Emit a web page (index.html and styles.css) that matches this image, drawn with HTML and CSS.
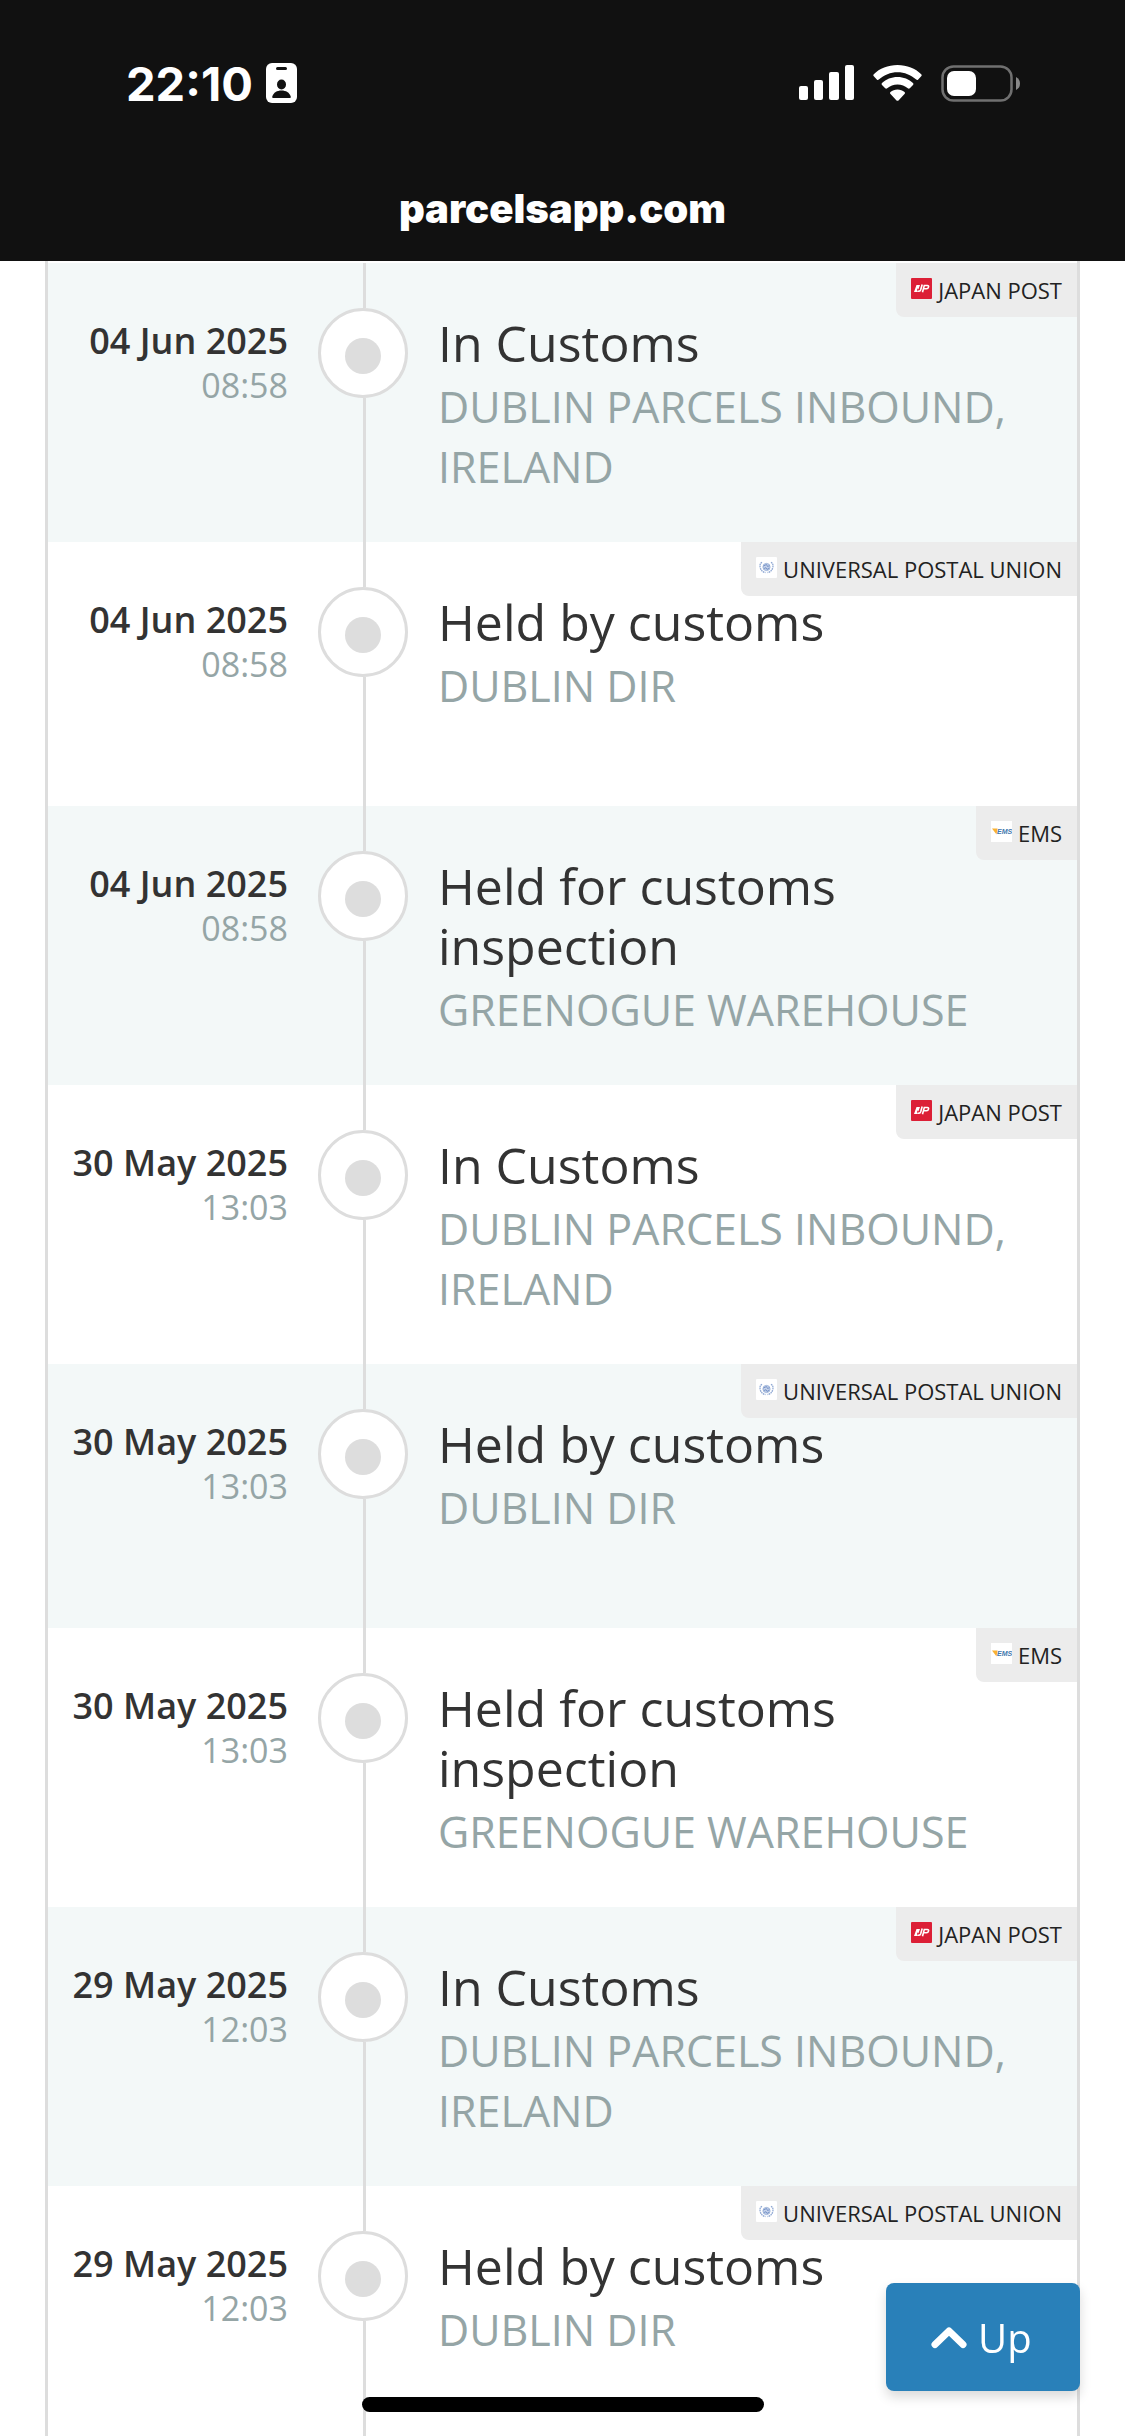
FILE: index.html
```
<!DOCTYPE html>
<html lang="en">
<head>
    <meta charset="UTF-8">
    <meta name="viewport" content="width=device-width, initial-scale=1.0">
    <title>Parcel tracking - parcelsapp.com</title>
    <link rel="stylesheet" href="styles.css">
</head>
<body>
    <!-- shared carrier logos -->
    <svg class="sprite" aria-hidden="true">
        <symbol id="logo-jp" viewBox="0 0 21 21">
            <rect width="21" height="21" rx="1" fill="#dc1f36"/>
            <path d="M5.500 7H9l-1.700 4.500-.6-1.200L6 12l1 2H3z" fill="#fff"/>
            <path d="M11.200 6.500L9.600 12q-.5 1.500-2.800 1.300M11.500 14.200L13.300 7.500h3q1.700 0 1.200 1.600-.4 1.600-2 1.600h-2.700" fill="none" stroke="#fff" stroke-width="1.600"/>
        </symbol>
        <symbol id="logo-upu" viewBox="0 0 21 21">
            <rect width="21" height="21" rx="1" fill="#fff"/>
            <circle cx="10.500" cy="10" r="3.600" fill="#c5d2ea" stroke="#8fa8d3" stroke-width=".8"/>
            <path d="M7.500 9l3-1.500 1 2 2-.8M8 11.500l2-.8 1 1.800 2-1.500" fill="none" stroke="#6f8dc4" stroke-width=".9"/>
            <path d="M6 5.200Q3 7 4.500 11.500 5.700 15 9.500 15.500M15 5.200Q18 7 16.500 11.500 15.300 15 11.500 15.500" fill="none" stroke="#8fa8d3" stroke-width="1.300" stroke-dasharray="1.600 .6"/>
        </symbol>
        <symbol id="logo-ems" viewBox="0 0 21 21">
            <rect width="21" height="21" fill="#fff"/>
            <path d="M1 7.500h5.500l-1 6z" fill="#f9b233"/>
            <text x="6" y="13" class="logo-ems-text">EMS</text>
        </symbol>
    </svg>

    <header class="topbar">
        <div class="status">
            <div class="status-left">
                <span>22:10</span>
                <svg width="31" height="40" viewBox="0 0 31 40" aria-hidden="true">
                    <rect width="31" height="40" rx="6" fill="#fff"/>
                    <rect x="10" y="4" width="11" height="3" rx="1.500" fill="#111"/>
                    <ellipse cx="15.500" cy="21.500" rx="4.500" ry="5" fill="#111"/>
                    <path d="M7 35q-1 0-.7-1.500C7.500 29.500 11 27.500 15.500 27.500s8 2 9.200 6q.3 1.500-.7 1.500z" fill="#111"/>
                </svg>
            </div>
            <div class="status-right">
                <svg width="55" height="36" viewBox="0 0 55 36" fill="#fff" aria-hidden="true">
                    <rect x="0" y="21" width="9" height="14" rx="2"/>
                    <rect x="15" y="15" width="9" height="20" rx="2"/>
                    <rect x="30" y="7" width="10" height="28" rx="2"/>
                    <rect x="46" y="0" width="9" height="35" rx="2"/>
                </svg>
                <svg width="49" height="36" viewBox="0 0 49 36" fill="#fff" aria-hidden="true">
                    <path d="M24.500 0C15 0 6.500 3.500.8 9.200q-1 1 0 2l3 3.200q1 1 2 .1C11 9.800 17.500 7.200 24.500 7.200s13.500 2.600 18.700 7.300q1 .9 2-.1l3-3.200q1-1 0-2C42.500 3.500 34 0 24.500 0z"/>
                    <path d="M24.500 12c-6 0-11.500 2.300-15.500 6q-1 1 0 2l3.200 3.300q1 .9 2 0c2.800-2.400 6.400-3.900 10.300-3.900s7.500 1.500 10.300 3.900q1 .9 2 0L40 20q1-1 0-2c-4-3.700-9.500-6-15.500-6z"/>
                    <path d="M24.500 24.500c-2.700 0-5.200 1-7 2.500q-1 .9 0 2l6 6.400q1 .9 2 0l6-6.400q1-1.100 0-2c-1.800-1.500-4.300-2.500-7-2.500z"/>
                </svg>
                <svg width="79" height="37" viewBox="0 0 79 37" aria-hidden="true">
                    <rect x="1.500" y="1.500" width="69" height="34" rx="11" fill="none" stroke="#707070" stroke-width="2.500"/>
                    <rect x="6" y="6" width="29" height="25" rx="7" fill="#fff"/>
                    <path d="M75 12q4 2 4 6.500T75 25z" fill="#888"/>
                </svg>
            </div>
        </div>
        <div class="address">parcelsapp.com</div>
    </header>

    <main class="tracking">
        <ul class="events">
            <li class="event">
                <div class="event-time"><strong>04 Jun 2025</strong><span>08:58</span></div>
                <div class="event-spine"><i class="event-dot"></i></div>
                <div class="event-content"><strong>In Customs</strong><span>DUBLIN PARCELS INBOUND, IRELAND</span></div>
                <div class="carrier"><svg><use href="#logo-jp"/></svg>JAPAN POST</div>
            </li>
            <li class="event">
                <div class="event-time"><strong>04 Jun 2025</strong><span>08:58</span></div>
                <div class="event-spine"><i class="event-dot"></i></div>
                <div class="event-content"><strong>Held by customs</strong><span>DUBLIN DIR</span></div>
                <div class="carrier"><svg><use href="#logo-upu"/></svg>UNIVERSAL POSTAL UNION</div>
            </li>
            <li class="event">
                <div class="event-time"><strong>04 Jun 2025</strong><span>08:58</span></div>
                <div class="event-spine"><i class="event-dot"></i></div>
                <div class="event-content"><strong>Held for customs inspection</strong><span>GREENOGUE WAREHOUSE</span></div>
                <div class="carrier"><svg><use href="#logo-ems"/></svg>EMS</div>
            </li>
            <li class="event">
                <div class="event-time"><strong>30 May 2025</strong><span>13:03</span></div>
                <div class="event-spine"><i class="event-dot"></i></div>
                <div class="event-content"><strong>In Customs</strong><span>DUBLIN PARCELS INBOUND, IRELAND</span></div>
                <div class="carrier"><svg><use href="#logo-jp"/></svg>JAPAN POST</div>
            </li>
            <li class="event">
                <div class="event-time"><strong>30 May 2025</strong><span>13:03</span></div>
                <div class="event-spine"><i class="event-dot"></i></div>
                <div class="event-content"><strong>Held by customs</strong><span>DUBLIN DIR</span></div>
                <div class="carrier"><svg><use href="#logo-upu"/></svg>UNIVERSAL POSTAL UNION</div>
            </li>
            <li class="event">
                <div class="event-time"><strong>30 May 2025</strong><span>13:03</span></div>
                <div class="event-spine"><i class="event-dot"></i></div>
                <div class="event-content"><strong>Held for customs inspection</strong><span>GREENOGUE WAREHOUSE</span></div>
                <div class="carrier"><svg><use href="#logo-ems"/></svg>EMS</div>
            </li>
            <li class="event">
                <div class="event-time"><strong>29 May 2025</strong><span>12:03</span></div>
                <div class="event-spine"><i class="event-dot"></i></div>
                <div class="event-content"><strong>In Customs</strong><span>DUBLIN PARCELS INBOUND, IRELAND</span></div>
                <div class="carrier"><svg><use href="#logo-jp"/></svg>JAPAN POST</div>
            </li>
            <li class="event">
                <div class="event-time"><strong>29 May 2025</strong><span>12:03</span></div>
                <div class="event-spine"><i class="event-dot"></i></div>
                <div class="event-content"><strong>Held by customs</strong><span>DUBLIN DIR</span></div>
                <div class="carrier"><svg><use href="#logo-upu"/></svg>UNIVERSAL POSTAL UNION</div>
            </li>
        </ul>
    </main>

    <button type="button" class="up-button">
        <svg width="36" height="23" viewBox="0 0 36 23" aria-hidden="true">
            <path d="M4 18.500L18 5l14 13.500" fill="none" stroke="#fff" stroke-width="7" stroke-linecap="round" stroke-linejoin="round"/>
        </svg>
        Up
    </button>
    <div class="home-indicator"></div>
</body>
</html>
```
FILE: styles.css
```
* {
    box-sizing: border-box;
}
body {
    margin: 0;
    height: 100vh;
    display: flex;
    flex-direction: column;
    overflow: hidden;
    font-family: "Open Sans", "Noto Sans", sans-serif;
    background-color: white;
    color: #333;
}
.sprite {
    display: none;
}
.logo-ems-text {
    font: italic 700 7px "Liberation Sans", sans-serif;
    fill: #3f76ad;
}

/* phone status bar and address */
.topbar {
    flex: none;
    padding-bottom: 9px;
    background-color: #111;
    color: white;
    font-family: Inter, sans-serif;
}
.status {
    display: flex;
    justify-content: space-between;
    align-items: center;
    height: 166px;
    padding: 0 105px 0 126px;
}
.status-left {
    display: flex;
    align-items: center;
    gap: 13px;
    font-size: 47px;
    font-weight: 700;
}
.status-right {
    display: flex;
    align-items: center;
    gap: 19px;
}
.address {
    font-size: 40px;
    font-weight: 900;
    line-height: 86px;
    text-align: center;
}

/* timeline */
.tracking {
    flex: 1;
    min-height: 0;
    margin: 0 45px;
    padding-top: 2px;
    border: solid #ddd;
    border-width: 0 3px;
    overflow: hidden;
}
.events {
    margin: 0;
    padding: 0;
    list-style: none;
}
.event {
    position: relative;
    display: grid;
    grid-template-columns: 270px 90px 1fr;
    min-height: 264px;
}
.event:nth-child(odd) {
    background-color: #f3f8f8;
}
.event-time {
    padding: 55px 30px 0 0;
    text-align: right;
    font-size: 34px;
    line-height: 45px;
    color: #95a5a6;
}
.event-time strong {
    display: block;
    font-size: 36px;
    font-weight: 600;
    color: #333;
}
.event-spine {
    display: flex;
    flex-direction: column;
    align-items: center;
}
.event-spine::before,
.event-spine::after {
    content: "";
    width: 3px;
    height: 45px;
    margin-left: 2px;
    background-color: #ddd;
}
.event-spine::after {
    flex: 1;
}
.event-dot {
    display: flex;
    justify-content: center;
    align-items: center;
    width: 90px;
    height: 90px;
    padding-top: 6px;
    border: 3px solid #ddd;
    border-radius: 50%;
    background-color: white;
}
.event-dot::before {
    content: "";
    width: 36px;
    height: 36px;
    border-radius: 50%;
    background-color: #ddd;
}
.event-content {
    padding: 50px 30px 45px;
    font-size: 43px;
    line-height: 60px;
    color: #95a5a6;
}
.event-content strong {
    display: block;
    margin-bottom: 4px;
    font-size: 50px;
    font-weight: 400;
    color: #333;
}
.event-content span {
    display: block;
}
.carrier {
    position: absolute;
    top: 0;
    right: 0;
    display: flex;
    align-items: center;
    gap: 6px;
    height: 54px;
    padding: 0 15px;
    border-bottom-left-radius: 8px;
    background-color: #ececec;
    color: #222;
    font-size: 22px;
}
.carrier svg {
    width: 21px;
    height: 21px;
    margin-bottom: 3px;
}

.up-button {
    position: fixed;
    right: 45px;
    bottom: 45px;
    display: flex;
    align-items: center;
    gap: 11px;
    width: 194px;
    height: 108px;
    padding: 0 0 0 45px;
    border: none;
    border-radius: 8px;
    background-color: #2980b9;
    box-shadow: 0 6px 12px rgba(0, 0, 0, 0.15);
    color: white;
    font: 400 40px "Open Sans", sans-serif;
    cursor: pointer;
}
.home-indicator {
    position: fixed;
    left: 50%;
    bottom: 24px;
    width: 402px;
    height: 15px;
    border-radius: 8px;
    background-color: black;
    transform: translateX(-50%);
}
```
